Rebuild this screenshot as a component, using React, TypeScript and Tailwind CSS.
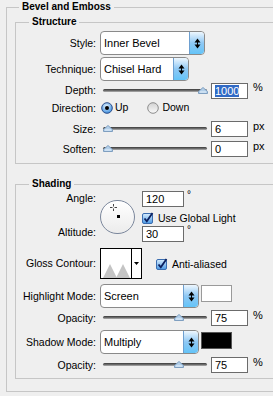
import React from "react";

function Label({ children }: { children: React.ReactNode }) {
  return <div className="w-[80px] shrink-0 text-right text-[10.5px] leading-[13px] text-black">{children}</div>;
}

function Dropdown({ value, className }: { value: string; className: string }) {
  return (
    <div className={`${className} h-[24px] flex rounded-[4px] border border-[#8a8a8a] bg-white overflow-hidden`}>
      <div className="flex-1 flex items-center pl-[3px] text-[11px] text-black">{value}</div>
      <div className="w-[15px] h-full flex items-center justify-center rounded-r-[3px] border-l border-[#6d9fd0] bg-gradient-to-b from-[#eef7fe] via-[#8ec8f4] to-[#63c4f8]">
        <svg width="7" height="11" viewBox="0 0 7 11">
          <path d="M3.5 0.5L6.5 4.5H0.5z" fill="#000" />
          <path d="M3.5 10.5L0.5 6.5h6z" fill="#000" />
          <path d="M3.5 4v3" stroke="#000" strokeWidth="1" />
        </svg>
      </div>
    </div>
  );
}

function Slider({ pos }: { pos: number }) {
  return (
    <div className="relative w-[108px] h-[10px] shrink-0">
      <div className="absolute left-[3px] right-[1px] top-[3px] h-[3px] rounded-full bg-gradient-to-b from-[#3a3a3a] via-[#6a6a6a] to-[#b5b5b5]" />
      <svg className="absolute top-[1px]" style={{ left: pos }} width="10" height="7" viewBox="0 0 10 7">
        <path d="M5 0.5L9.5 4.5V6.5H0.5V4.5z" fill="#b3cfe9" stroke="#7f9fc0" strokeWidth="1" />
        <path d="M2 5h6" stroke="#e4f0fb" strokeWidth="1" />
      </svg>
    </div>
  );
}

function Field({ value, className, selected }: { value: string; className: string; selected?: boolean }) {
  return (
    <div className={`${className} h-[16px] shrink-0 flex items-center border border-[#6b6b6b] bg-white pl-[3px] text-[11px] text-black`}>
      {selected ? <span className="bg-[#316ac5] text-white leading-[12px]">{value}</span> : value}
    </div>
  );
}

function Checkbox() {
  return (
    <svg width="12" height="12" viewBox="0 0 12 12" className="shrink-0">
      <defs>
        <linearGradient id="cbg" x1="0" y1="0" x2="0" y2="1">
          <stop offset="0" stopColor="#d9eeff" />
          <stop offset="1" stopColor="#4a98e4" />
        </linearGradient>
      </defs>
      <rect x="0.5" y="1.5" width="10" height="10" rx="1.5" fill="url(#cbg)" stroke="#3b6db0" />
      <path d="M2.5 6.5l2.3 2.8L10.5 1" fill="none" stroke="#0b1f5e" strokeWidth="1.8" />
    </svg>
  );
}

function SliderRow({ label, pos, value, unit, className }: { label: string; pos: number; value: string; unit: string; className: string }) {
  return (
    <div className={`${className} h-[16px] flex items-center gap-[4px]`}>
      <Label>{label}</Label>
      <Slider pos={pos} />
      <Field value={value} className="w-[37px] ml-[-1px]" />
      <span className="ml-[1px] text-[11px] leading-[11px] self-start">{unit}</span>
    </div>
  );
}

export default function App() {
  return (
    <div className="w-[273px] h-[396px] overflow-hidden bg-[#efefef] font-['Liberation_Sans',Arial,sans-serif] text-black">
      <fieldset className="ml-[6px] w-[300px] border border-[#c6c6c6] pb-[12px]">
        <legend className="ml-[12px] px-[3px] text-[10px] font-bold leading-[14px]">Bevel and Emboss</legend>

        <fieldset className="ml-[8px] mt-[1px] w-[290px] border border-[#c6c6c6] pb-[6px]">
          <legend className="ml-[13px] px-[3px] text-[10px] font-bold leading-[14px]">Structure</legend>

          <div className="mt-[2px] flex items-center gap-[4px]">
            <Label>Style:</Label>
            <Dropdown value="Inner Bevel" className="w-[105px]" />
          </div>
          <div className="mt-[2px] flex items-center gap-[4px]">
            <Label>Technique:</Label>
            <Dropdown value="Chisel Hard" className="w-[89px]" />
          </div>
          <div className="mt-[1px] h-[17px] flex items-center gap-[4px]">
            <Label>Depth:</Label>
            <Slider pos={98} />
            <Field value="1000" selected className="w-[37px] ml-[-1px]" />
            <span className="ml-[1px] text-[11px] leading-[11px] self-start">%</span>
          </div>
          <div className="mt-[2px] h-[14px] flex items-center gap-[4px]">
            <Label>Direction:</Label>
            <svg width="12" height="12" viewBox="0 0 12 12" className="ml-[1px]">
              <defs>
                <radialGradient id="rup" cx="0.45" cy="0.35" r="0.7">
                  <stop offset="0" stopColor="#e8f5ff" />
                  <stop offset="1" stopColor="#2f86dc" />
                </radialGradient>
              </defs>
              <circle cx="6" cy="6" r="5.3" fill="url(#rup)" stroke="#2d4f8a" strokeWidth="1" />
              <circle cx="6" cy="6" r="2" fill="#000" />
            </svg>
            <span className="ml-[-2px] text-[10.5px]">Up</span>
            <svg width="12" height="12" viewBox="0 0 12 12" className="ml-[15px]">
              <defs>
                <linearGradient id="rdn" x1="0" y1="0" x2="0" y2="1">
                  <stop offset="0" stopColor="#d2d2d2" />
                  <stop offset="1" stopColor="#fafafa" />
                </linearGradient>
              </defs>
              <circle cx="6" cy="6" r="5.3" fill="url(#rdn)" stroke="#8c8c8c" strokeWidth="1" />
            </svg>
            <span className="ml-[-1px] text-[10.5px]">Down</span>
          </div>
          <SliderRow label="Size:" pos={3} value="6" unit="px" className="mt-[6px]" />
          <SliderRow label="Soften:" pos={3} value="0" unit="px" className="mt-[4px]" />
        </fieldset>

        <fieldset className="ml-[8px] mt-[13px] w-[290px] border border-[#c6c6c6] pb-[5px]">
          <legend className="ml-[13px] px-[3px] text-[10px] font-bold leading-[14px]">Shading</legend>

          <div className="flex items-center">
            <div className="w-[80px] h-[50px] flex flex-col justify-between pb-[3px] text-right text-[10.5px] leading-[13px]">
              <div>Angle:</div>
              <div>Altitude:</div>
            </div>
            <div className="relative ml-[4px] w-[35px] h-[34px] mt-[1px] rounded-full border-[1.5px] border-[#7b879c] bg-gradient-to-b from-[#ffffff] to-[#ececec]">
              <svg className="absolute left-[9px] top-[3px]" width="7" height="7" viewBox="0 0 7 7">
                <path d="M3.5 0v2.5M3.5 4.5V7M0 3.5h2.5M4.5 3.5H7" stroke="#444" strokeWidth="1" />
              </svg>
              <div className="absolute left-[16px] top-[14px] w-[3px] h-[3px] bg-black" />
            </div>
            <div className="ml-[7px] flex flex-col">
              <div className="flex items-start">
                <Field value="120" className="w-[42px] h-[15px]" />
                <span className="ml-[3px] text-[10px] leading-[8px]">°</span>
              </div>
              <div className="mt-[5px] flex items-center gap-[4px]">
                <Checkbox />
                <span className="text-[10.5px] leading-[12px]">Use Global Light</span>
              </div>
              <div className="mt-[2px] flex items-start">
                <Field value="30" className="w-[42px] h-[15px]" />
                <span className="ml-[3px] text-[10px] leading-[8px]">°</span>
              </div>
            </div>
          </div>

          <div className="mt-[6px] flex items-center gap-[4px]">
            <Label>Gloss Contour:</Label>
            <div className="w-[42px] h-[31px] flex border border-black bg-white">
              <svg width="30" height="29" viewBox="0 0 30 29" className="block">
                <path d="M2 29L9 15L16 29z M15 29L22 15L29 29z" fill="#c4c4c4" />
              </svg>
              <div className="flex-1 border-l border-black flex items-center justify-center">
                <svg width="5" height="3" viewBox="0 0 5 3"><path d="M0 0h5L2.5 3z" fill="#000" /></svg>
              </div>
            </div>
            <div className="ml-[10px] flex items-center gap-[4px]">
              <Checkbox />
              <span className="text-[10.5px] leading-[12px]">Anti-aliased</span>
            </div>
          </div>

          <div className="mt-[5px] flex items-start gap-[4px]">
            <div className="h-[24px] flex items-center"><Label>Highlight Mode:</Label></div>
            <Dropdown value="Screen" className="w-[99px]" />
            <div className="ml-[-2px] mt-[1px] w-[31px] h-[17px] border border-[#9a9a9a] bg-white" />
          </div>
          <SliderRow label="Opacity:" pos={74} value="75" unit="%" className="mt-[2px]" />

          <div className="mt-[4px] flex items-start gap-[4px]">
            <div className="h-[24px] flex items-center"><Label>Shadow Mode:</Label></div>
            <Dropdown value="Multiply" className="w-[99px]" />
            <div className="ml-[-2px] mt-[2px] w-[31px] h-[17px] border border-[#555] bg-black" />
          </div>
          <SliderRow label="Opacity:" pos={74} value="75" unit="%" className="mt-[3px]" />
        </fieldset>
      </fieldset>
    </div>
  );
}
